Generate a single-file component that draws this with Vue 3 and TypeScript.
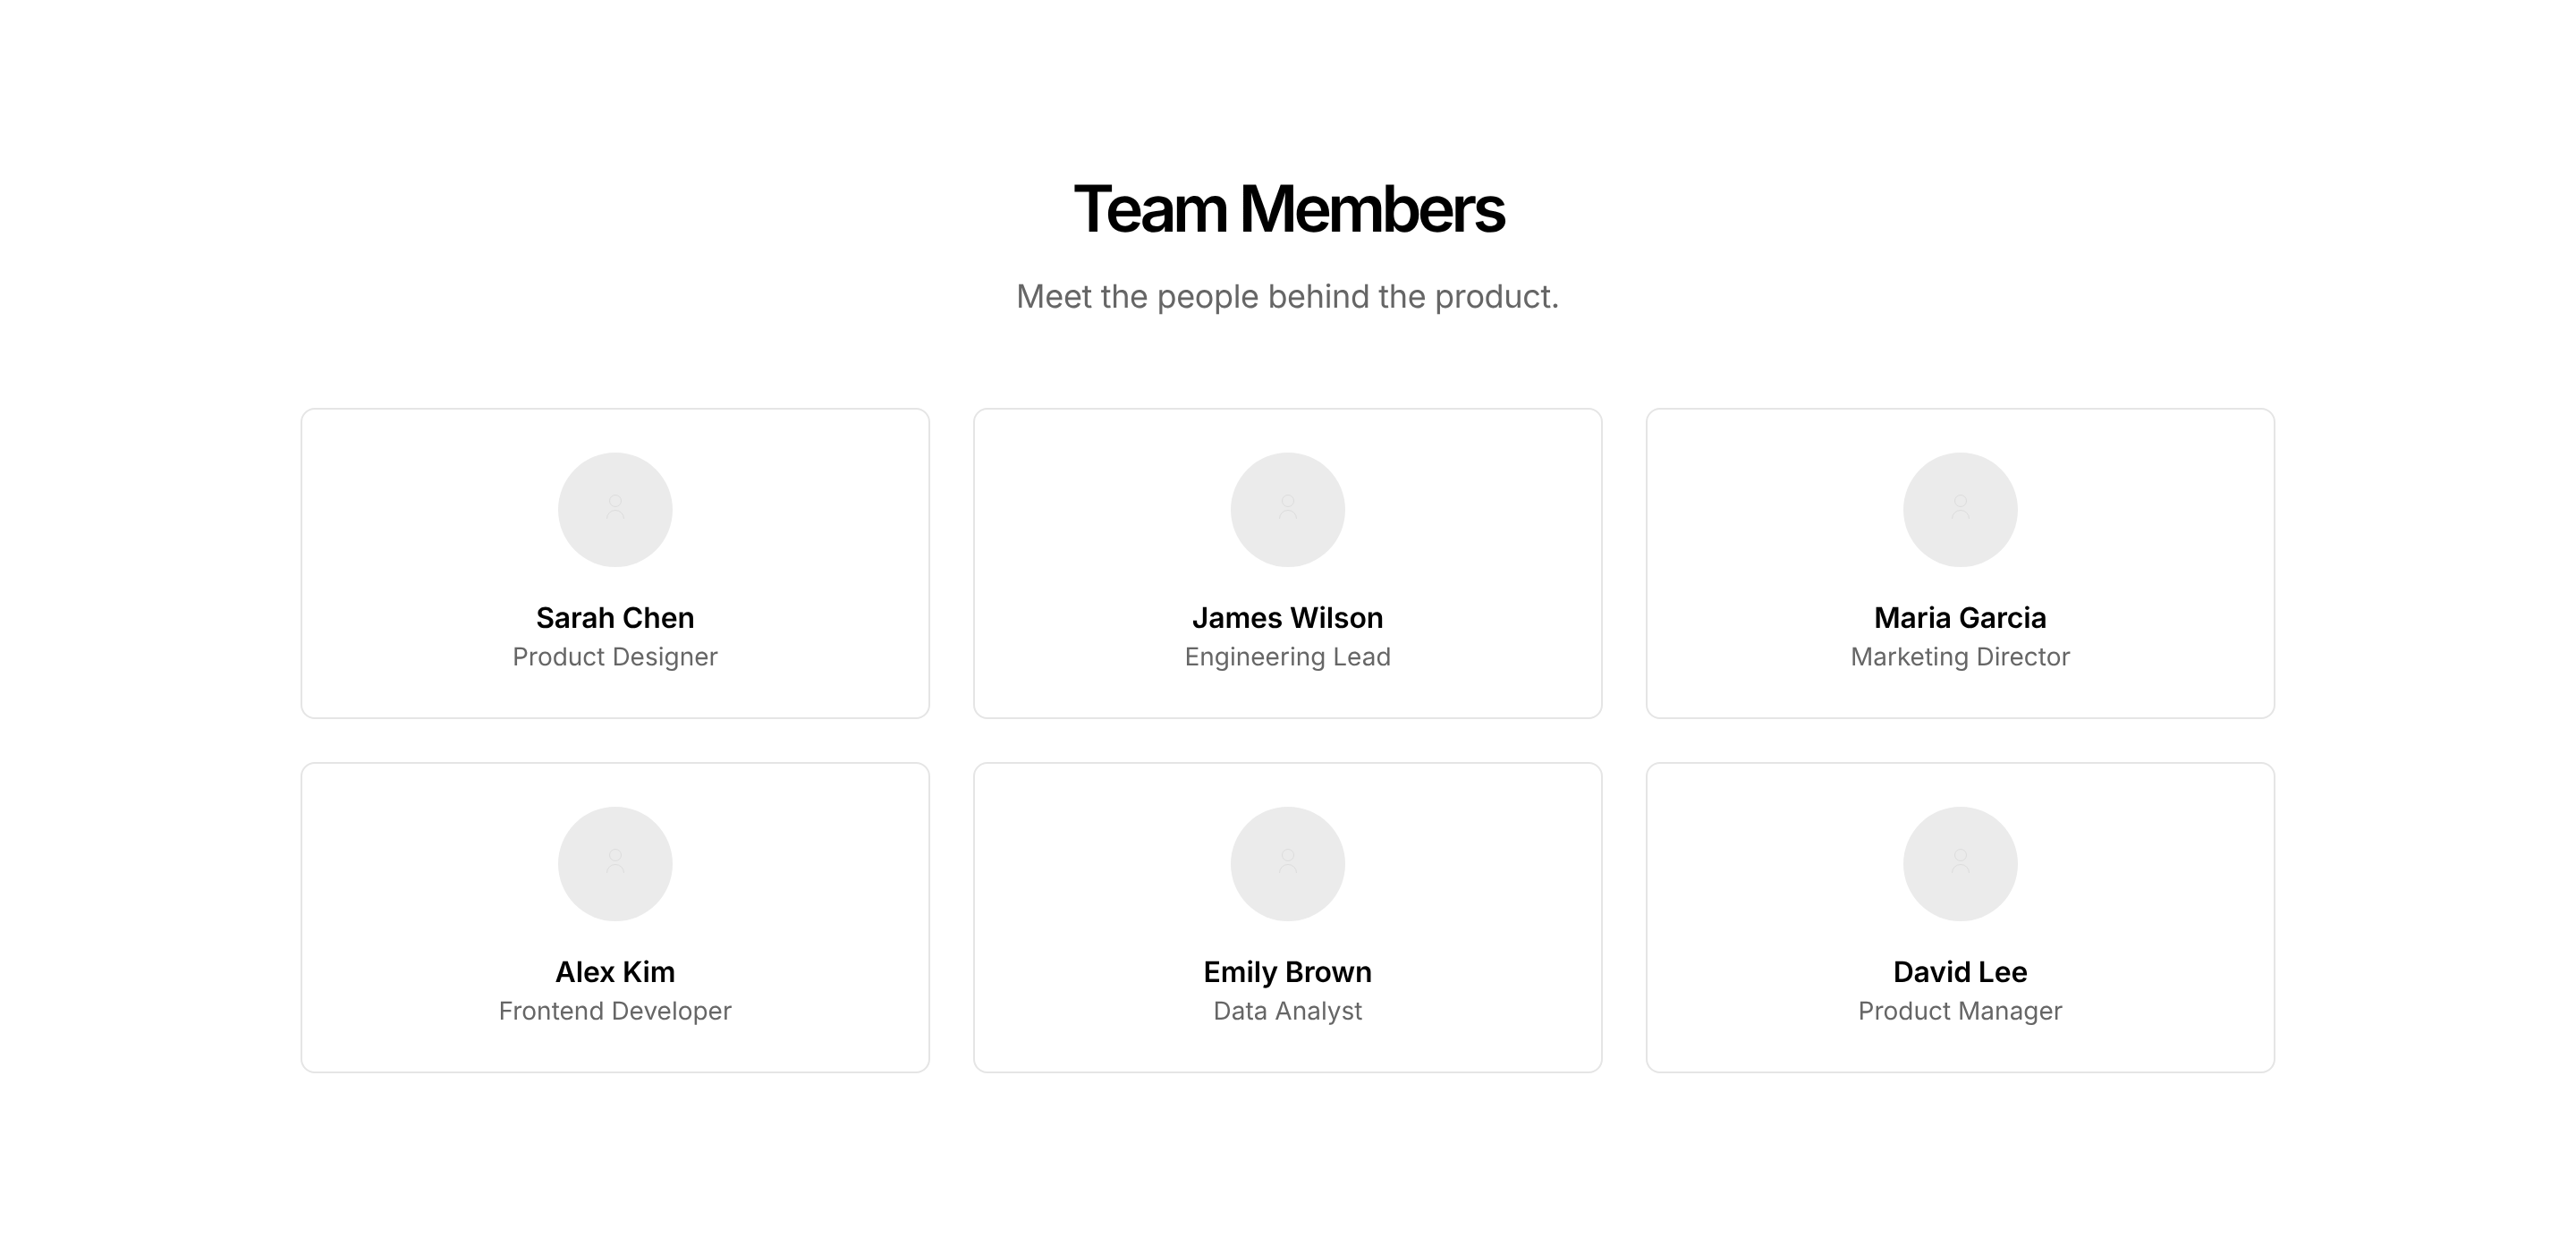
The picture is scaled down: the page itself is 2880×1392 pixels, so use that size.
<script setup lang="ts">
interface Member {
  name: string;
  role: string;
}

const members: Member[] = [
  { name: 'Sarah Chen', role: 'Product Designer' },
  { name: 'James Wilson', role: 'Engineering Lead' },
  { name: 'Maria Garcia', role: 'Marketing Director' },
  { name: 'Alex Kim', role: 'Frontend Developer' },
  { name: 'Emily Brown', role: 'Data Analyst' },
  { name: 'David Lee', role: 'Product Manager' },
]
</script>

<template>
  <section class="team">
    <header class="team__header">
      <h1 class="team__title">Team Members</h1>
      <p class="team__subtitle">Meet the people behind the product.</p>
    </header>

    <div class="team__grid">
      <article v-for="member in members" :key="member.name" class="member">
        <div class="member__avatar">
          <svg class="member__icon" viewBox="0 0 48 48" fill="none">
            <circle cx="24" cy="14" r="6.5" />
            <path d="M14.5 34a9.5 9.5 0 0 1 19 0" />
          </svg>
        </div>
        <h2 class="member__name">{{ member.name }}</h2>
        <p class="member__role">{{ member.role }}</p>
      </article>
    </div>
  </section>
</template>

<style>
body {
  background: #fff;
}
</style>

<style scoped>
.team {
  box-sizing: border-box;
  width: 2208px;
  margin: 0 auto;
  padding-top: 194px;
  font-family: 'Inter', sans-serif;
  text-rendering: geometricPrecision;
  will-change: transform; /* own layer, gives greyscale text edges */
}

.team__header {
  text-align: center;
  margin-bottom: 96px;
}

.team__title {
  margin: 0 0 28px;
  font-size: 72px;
  font-weight: 600;
  line-height: 80px;
  letter-spacing: -0.065em;
  color: #000;
}

.team__subtitle {
  margin: 0;
  font-size: 36px;
  font-weight: 400;
  line-height: 58px;
  letter-spacing: -0.01em;
  color: #666;
}

.team__grid {
  display: grid;
  grid-template-columns: repeat(3, 1fr);
  gap: 48px;
}

.member {
  box-sizing: border-box;
  border: 2px solid #e5e5e5;
  border-radius: 16px;
  padding: 48px;
  display: flex;
  flex-direction: column;
  align-items: center;
  text-align: center;
}

.member__avatar {
  width: 128px;
  height: 128px;
  border-radius: 50%;
  background: #ebebeb;
  display: flex;
  align-items: center;
  justify-content: center;
  margin-bottom: 33px;
}

.member__icon {
  width: 48px;
  height: 48px;
  stroke: #dcdcdc;
  stroke-width: 1;
}

.member__name {
  margin: 0;
  font-size: 32px;
  font-weight: 600;
  line-height: 47px;
  letter-spacing: -0.005em;
  color: #000;
}

.member__role {
  margin: 0;
  font-size: 28px;
  font-weight: 400;
  line-height: 40px;
  color: #666;
}
</style>
